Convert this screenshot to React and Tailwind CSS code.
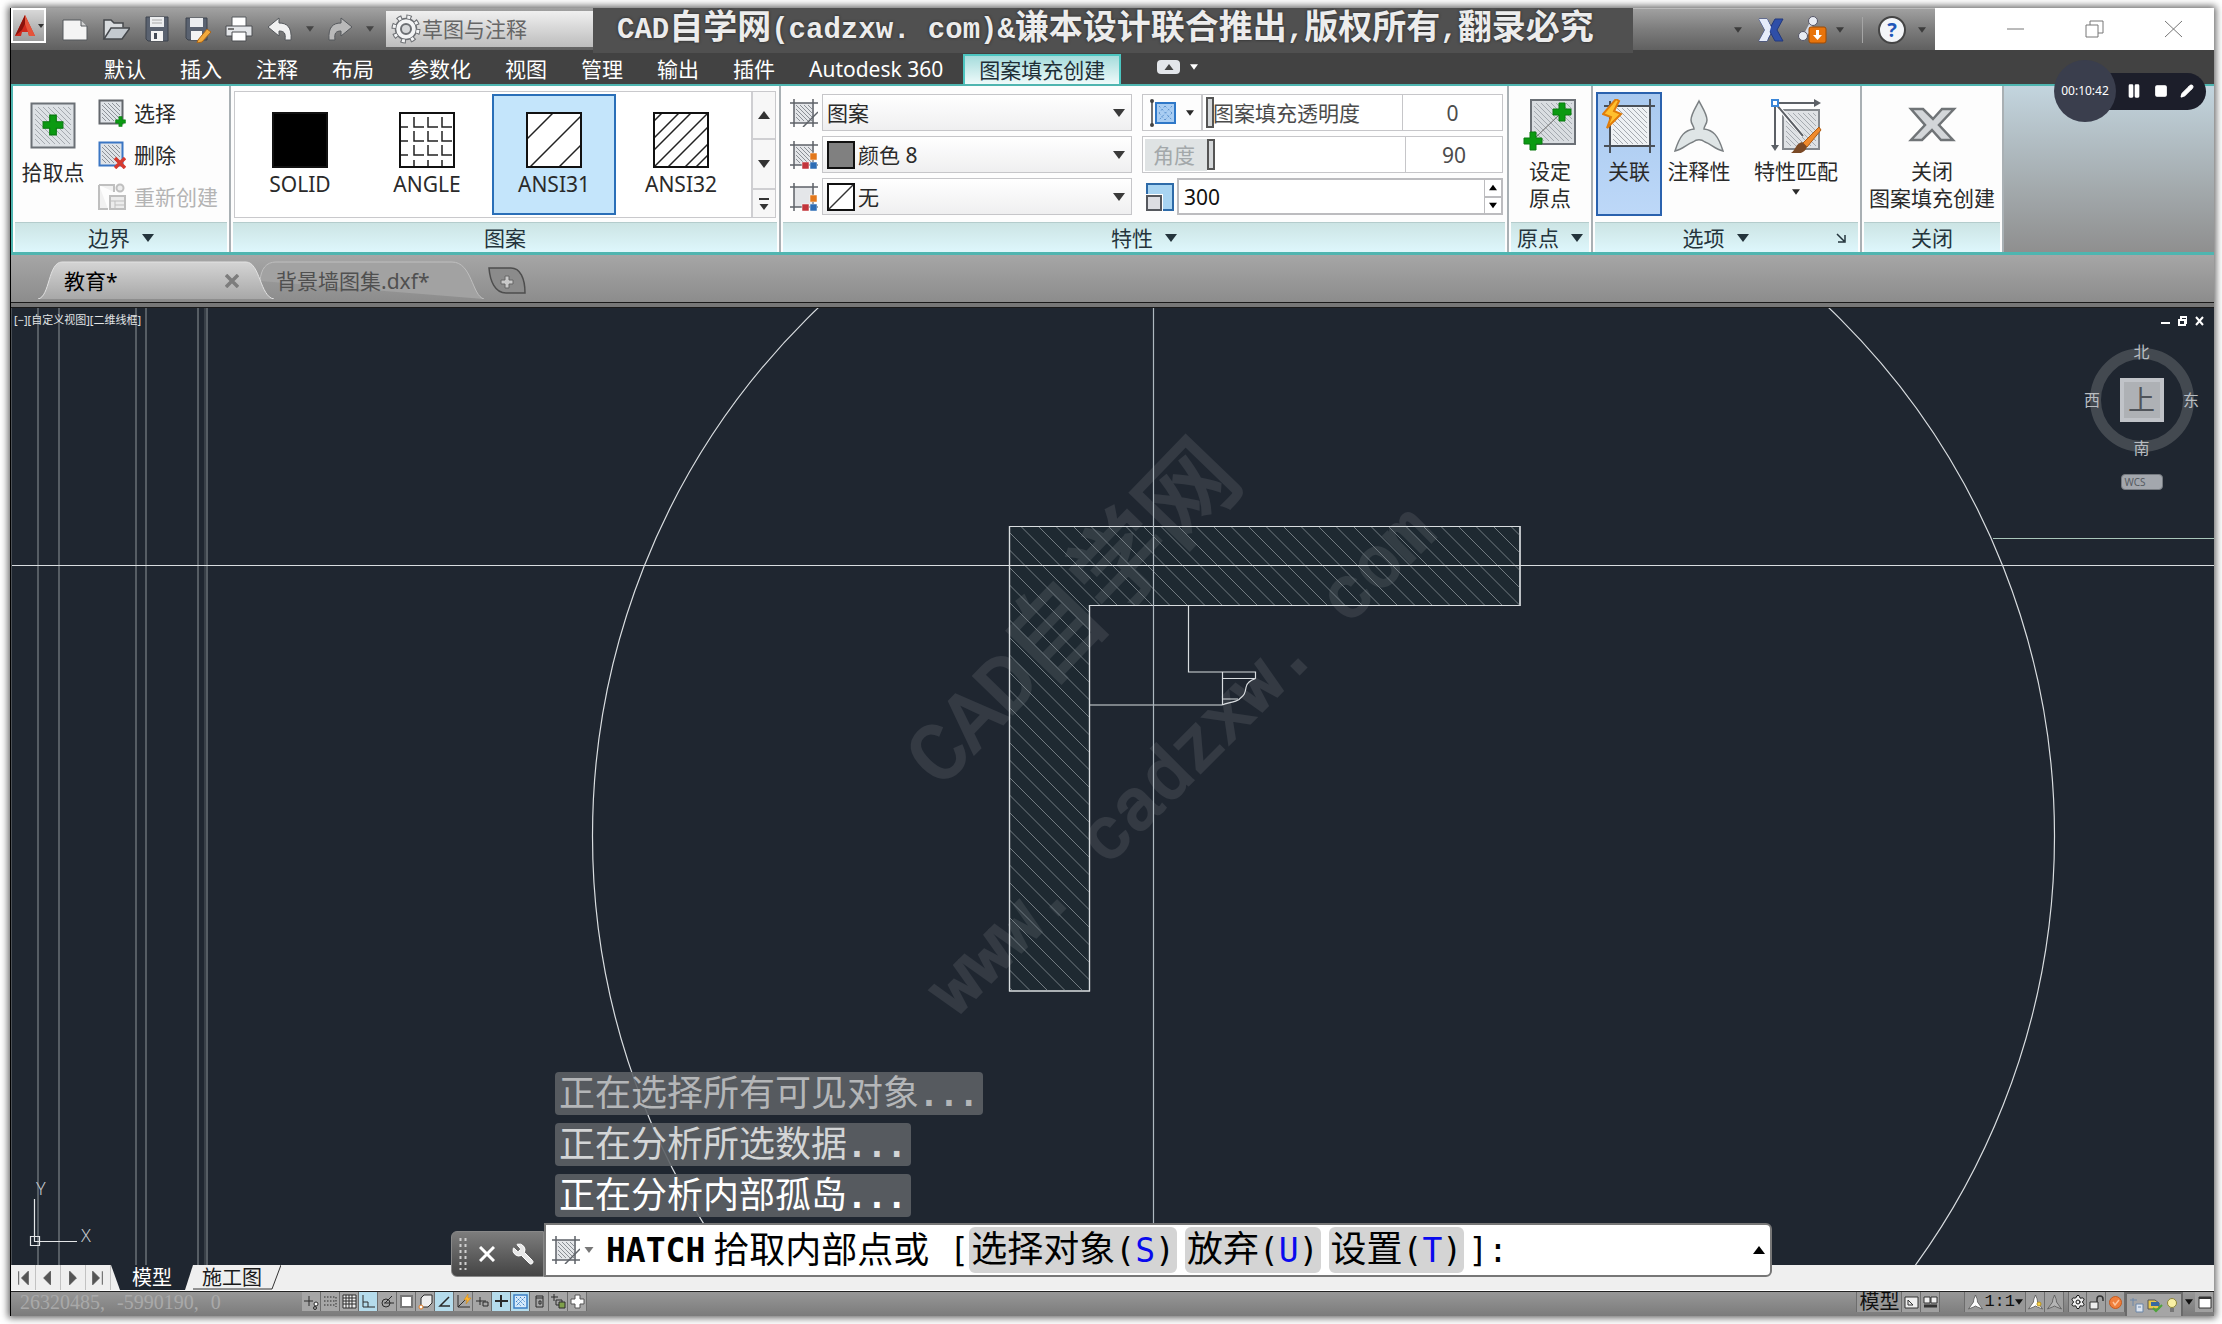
import React from "react";
import { Pause, Square, Pencil, Wrench, Settings } from "lucide-react";

const Caret = ({ up = false, className = "w-3 h-2" }) => (
  <svg viewBox="0 0 12 8" className={className} aria-hidden="true">
    <path d={up ? "M0 8h12L6 0z" : "M0 0h12L6 8z"} fill="currentColor" />
  </svg>
);

const HatchLines = ({ x, y, w, h, step = 4, color = "#8d9299" }) => {
  const id = `h${x}-${y}-${w}-${h}-${step}`;
  return (
    <>
      <clipPath id={id}>
        <rect x={x} y={y} width={w} height={h} />
      </clipPath>
      <g clipPath={`url(#${id})`} stroke={color} strokeWidth="1">
        {Array.from({ length: Math.ceil((w + h) / step) }, (_, i) => (
          <path key={i} d={`M${x - h + i * step} ${y}l${h} ${h}`} />
        ))}
      </g>
    </>
  );
};

const Plus = ({ x, y, s = 1 }) => (
  <path
    transform={`translate(${x} ${y}) scale(${s})`}
    d="M-3-9h6v6h6v6h-6v6h-6V3h-6v-6h6z"
    fill="#0b9a12"
    stroke="#0a7a10"
    strokeWidth="1"
  />
);

/* ---------- quick access bar ---------- */

const quickIcons = {
  新建: (
    <>
      <path d="M2 5h18l6 6v14H2z" fill="#f4f4f4" stroke="#55585c" />
      <path d="M20 5v6h6" fill="#d0d0d0" stroke="#55585c" />
    </>
  ),
  打开: (
    <>
      <path d="M2 24V5h7l3 3h9v4" fill="#d9dcdf" stroke="#45484c" strokeWidth="1.5" />
      <path d="M2 24l7-11h19l-8 11z" fill="#c3c9cf" stroke="#45484c" strokeWidth="1.5" />
    </>
  ),
  保存: (
    <>
      <path d="M3 2h22v24H5l-2-2z" fill="#5a6270" stroke="#3c424c" />
      <path d="M7 2h14v10H7z" fill="#eceef0" />
      <path d="M9 5h10M9 8h10" stroke="#aaa" />
      <path d="M8 16h12v10H8z" fill="#f4f4f4" />
      <path d="M11 18h3v6h-3z" fill="#444b57" />
    </>
  ),
  另存为: (
    <>
      <path d="M2 3h21v22H4l-2-2z" fill="#5a6270" stroke="#3c424c" />
      <path d="M6 3h13v9H6z" fill="#eceef0" />
      <path d="M7 16h11v9H7z" fill="#f4f4f4" />
      <path d="M14 25l9-11 4 3-9 10-5 1z" fill="#f2a93b" stroke="#a8641a" />
    </>
  ),
  打印: (
    <>
      <path d="M7 2h14v10H7z" fill="#fff" stroke="#55585c" />
      <path d="M1 11h26v10H1z" fill="#e3e5e8" stroke="#4a4d51" />
      <path d="M7 17h14v9H7z" fill="#fff" stroke="#4a4d51" />
      <path d="M3 14h6" stroke="#777" strokeWidth="2" />
    </>
  ),
};

const UndoIcon = ({ flip = false }) => (
  <svg viewBox="0 0 28 28" className={flip ? "h-7 w-7 -scale-x-100" : "h-7 w-7"} aria-hidden="true">
    <path
      d="M2 12L13 3v5c8 0 13 4 12 17h-6c1-7-1-9-6-9v5z"
      fill={flip ? "#b9b9b9" : "#f1f1f1"}
      stroke="#55585c"
    />
  </svg>
);

const GearIcon = () => (
  <svg viewBox="0 0 32 32" className="h-8 w-8 shrink-0" aria-hidden="true">
    <circle cx="16" cy="16" r="12" fill="none" stroke="#6c6f73" strokeWidth="5" strokeDasharray="5 4.420" />
    <circle cx="16" cy="16" r="10.500" fill="#f3f4f5" stroke="#6c6f73" strokeWidth="1.500" />
    <circle cx="16" cy="16" r="12" fill="none" stroke="#f3f4f5" strokeWidth="3" strokeDasharray="3 6.420" strokeDashoffset="-1" />
    <circle cx="16" cy="16" r="5" fill="#d5d7d9" stroke="#6c6f73" strokeWidth="2" />
  </svg>
);

const TitleBar = () => (
  <header className="flex h-[42px] bg-linear-to-b from-[#a2a2a2] via-[#7d7d7d] to-[#606060]">
    <button
      aria-label="应用程序菜单"
      className="flex h-[35px] w-[35px] items-center justify-center gap-0.5 border-2 border-white bg-linear-to-b from-[#d8d8d8] to-[#9c9c9c]"
    >
      <svg viewBox="0 0 22 24" className="h-6 w-[22px]">
        <path d="M11 1L1 22h6l1-4h6l1 4h6z" fill="#cf2a1d" />
        <path d="M11 1L1 22l7-6 3-6z" fill="#8b130c" />
        <path d="M11 1v9l3 8 1 4h6z" fill="#e5533a" />
      </svg>
      <Caret className="h-1 w-1.5 text-[#333]" />
    </button>
    <div className="ml-[15px] flex flex-1 items-center">
      <div className="flex w-[325px] shrink-0 items-center gap-3 text-[#454545]">
        {Object.entries(quickIcons).map(([label, drawing]) => (
          <button key={label} aria-label={label} className="h-7 w-[29px]">
            <svg viewBox="0 0 28 28" className="h-7 w-7">{drawing}</svg>
          </button>
        ))}
        <button aria-label="放弃" className="flex items-center gap-3">
          <UndoIcon />
          <Caret className="h-1.5 w-2" />
        </button>
        <button aria-label="重做" className="flex items-center gap-3">
          <UndoIcon flip />
          <Caret className="h-1.5 w-2" />
        </button>
      </div>
      <div className="flex h-9 w-[207px] shrink-0 items-center bg-linear-to-b from-[#f0f0f0] to-[#bdbdbd] pl-1 text-[#666]">
        <GearIcon />
        <select aria-label="工作空间" className="w-full appearance-none bg-transparent text-[21px] leading-8 outline-none">
          <option>草图与注释</option>
        </select>
      </div>
      <h1 className="z-10 flex h-[45px] flex-1 items-center self-start overflow-hidden bg-[#505050] pl-6 font-['Liberation_Mono','Noto_Sans_CJK_SC',monospace] text-[34px] leading-[45px] font-bold whitespace-pre text-[#ececec] [text-shadow:0_0_3px_#222]">
        <span className="text-[29px]">CAD</span>自学网<span className="text-[29px]">(cadzxw. com)&amp;</span>谦本设计联合推出
        <span className="text-[29px]">,</span>版权所有<span className="text-[29px]">,</span>翻录必究
      </h1>
    </div>
    <div className="flex w-[302px] items-center border-t border-[#bbb] pl-[101px] text-[#3c3c3c]">
      <Caret className="h-1.5 w-2" />
      <button aria-label="Exchange" className="ml-4">
        <svg viewBox="0 0 26 24" className="h-6 w-[26px]">
          <path d="M1 1h8l6 11-6 11H1l6-11z" fill="#e6ecfa" stroke="#34488c" />
          <path d="M25 1h-8l-6 11 6 11h8l-6-11z" fill="#2f4fa8" stroke="#22387c" />
          <path d="M1 1h8l4 8-4 14H1l6-11z" fill="#e6ecfa" />
        </svg>
      </button>
      <button aria-label="Autodesk 应用" className="ml-3.5 flex items-center gap-2">
        <svg viewBox="0 0 30 28" className="h-7 w-[30px]">
          <path d="M15 5L7 20" stroke="#d5dbe8" strokeWidth="4" />
          <circle cx="15" cy="5" r="4.500" fill="#e8ecf4" stroke="#556" />
          <circle cx="5" cy="20" r="4.500" fill="#e8ecf4" stroke="#556" />
          <rect x="11" y="11" width="17" height="16" rx="2" fill="#e8740c" stroke="#9c4a04" />
          <path d="M18 14h3v5h3l-4.500 5-4.500-5h3z" fill="#fff" />
        </svg>
        <Caret className="h-1.5 w-2" />
      </button>
      <span className="ml-[18px] h-[26px] w-px bg-[#a5a5a5]" />
      <button
        aria-label="帮助"
        className="ml-[15px] flex h-7 w-7 items-center justify-center rounded-full border-2 border-[#444] bg-[#f3f5f8] text-xl leading-6 font-bold text-[#2257b8]"
      >
        ?
      </button>
      <Caret className="ml-3 h-1.5 w-2" />
    </div>
    <div className="flex w-[279px] items-center gap-[60px] bg-white pl-[71px] text-[#777]">
      {["M1 9h17", "M1 5h12v12H1zM5 5V1h13v12h-5", "M1 1l17 16M18 1L1 17"].map((d, i) => (
        <button key={d} aria-label={["最小化", "还原", "关闭"][i]} className="shrink-0">
          <svg viewBox="0 0 19 18" className="h-[18px] w-[19px]" fill="none" stroke="currentColor">
            <path d={d} />
          </svg>
        </button>
      ))}
    </div>
  </header>
);

const menuTabs = ["默认", "插入", "注释", "布局", "参数化", "视图", "管理", "输出", "插件", "Autodesk 360"];

const MenuTabs = () => (
  <nav className="flex h-[34px] items-end bg-[#424242] pl-[93px] text-[21px] leading-[30px] whitespace-nowrap text-white">
    <div className="flex gap-[34px]">
      {menuTabs.map((tab) => (
        <button key={tab} className="h-[30px]">{tab}</button>
      ))}
    </div>
    <button className="ml-5 h-[30px] border-2 border-b-0 border-[#4cc5c0] bg-linear-to-b from-[#a5dcdc] to-[#eefafa] px-3.5 leading-7 text-[#1e2e36]">
      图案填充创建
    </button>
    <button aria-label="最小化功能区" className="mb-2.5 ml-9 flex items-center gap-2.5">
      <span className="flex h-3.5 w-[23px] items-center justify-center rounded-sm bg-[#e3e6ea] text-[#444]">
        <Caret up className="h-1.5 w-2.5" />
      </span>
      <Caret className="h-1.5 w-2" />
    </button>
  </nav>
);

/* ---------- ribbon ---------- */

const Panel = ({ title, caret, launcher, className, children }) => (
  <section className={`flex shrink-0 flex-col border-r-2 border-[#a9b0b4] bg-[#fdfdfd] ${className}`}>
    <div className="h-[136px]">{children}</div>
    <div className="mx-0.5 flex h-[30px] items-center border-t border-[#b4cccc] bg-linear-to-b from-[#cce4e4] to-[#def7fc] text-[#24343c]">
      <h2 className="flex flex-1 items-center justify-center gap-3 text-[21px] leading-7">
        {title}
        {caret && <Caret />}
      </h2>
      {launcher && (
        <button aria-label="图案填充设置" className="w-[22px]">
          <svg viewBox="0 0 10 10" className="h-2.5 w-2.5" stroke="currentColor" strokeWidth="1.5" fill="none">
            <path d="M1 1l7 7M9 2v7H2" />
          </svg>
        </button>
      )}
    </div>
  </section>
);

const SmallBoundaryIcon = ({ kind }) => (
  <svg viewBox="0 0 28 28" className="h-7 w-7 shrink-0" aria-hidden="true">
    {kind === "rebuild" ? (
      <g stroke="#bfbfbf" fill="#ececec">
        <path d="M1 2h15v7M1 2v24h9" fill="#f1f1f1" strokeWidth="2" />
        <circle cx="22" cy="5" r="3.500" strokeWidth="2" />
        <path d="M12 13h15v13H12z" strokeWidth="2" />
        <path d="M12 18h15M17 18v8M17 22h10" />
      </g>
    ) : (
      <>
        <rect x="1.500" y="1.500" width="23" height="23" fill="#dfe3e8" stroke={kind === "remove" ? "#3b76c4" : "#63676c"} strokeWidth="2" />
        <HatchLines x={4} y={4} w={18} h={18} step={4} />
        {kind === "remove" ? (
          <path d="M17 17l10 10M27 17L17 27" stroke="#d63a2f" strokeWidth="3.500" />
        ) : (
          <Plus x={22.5} y={22.5} s={0.55} />
        )}
      </>
    )}
  </svg>
);

const boundaryActions = [
  { label: "选择", kind: "select" },
  { label: "删除", kind: "remove" },
  { label: "重新创建", kind: "rebuild" },
];

const BoundaryPanel = () => (
  <Panel title="边界" caret className="w-[218px]">
    <div className="flex">
      <button className="flex w-20 flex-col items-center gap-2.5 pt-4">
        <svg viewBox="0 0 46 48" className="h-12 w-[46px]">
          <rect x="1.500" y="1.500" width="43" height="44" fill="#dde1e5" stroke="#6b7076" strokeWidth="2" />
          <HatchLines x={5} y={5} w={36} h={37} step={5} color="#a5aab0" />
          <Plus x={23} y={23} s={1.1} />
        </svg>
        <span className="text-[21px] leading-6">拾取点</span>
      </button>
      <div className="flex-1 pt-1.5 pl-[5px]">
        {boundaryActions.map(({ label, kind }) => (
          <button
            key={label}
            disabled={kind === "rebuild"}
            className="flex h-[42px] items-center gap-2 text-[21px] leading-6 disabled:text-[#b4b4b4]"
          >
            <SmallBoundaryIcon kind={kind} />
            {label}
          </button>
        ))}
      </div>
    </div>
  </Panel>
);

const swatches = {
  SOLID: <rect width="56" height="56" fill="#000" />,
  ANGLE: (
    <path
      d="M0 15h9M15 5v10h10M29 5v10h10M43 5v10h10M0 29h9M15 19v10h10M29 19v10h10M43 19v10h10M0 43h9M15 33v10h10M29 33v10h10M43 33v10h10M15 48v8M29 48v8M43 48v8"
      stroke="#222"
      strokeWidth="1.500"
      fill="none"
    />
  ),
  ANSI31: <path d="M0 28L28 0M3 56L56 3M32 56L56 32" stroke="#222" strokeWidth="1.500" />,
  ANSI32: <path d="M0 10L10 0M0 27L27 0M0 39L39 0M2 54L54 2M14 56L56 14M31 56L56 31M42 56L56 42" stroke="#222" strokeWidth="1.500" />,
};

const PatternPanel = () => (
  <Panel title="图案" className="w-[550px]">
    <div className="pt-[5px] pr-[3px] pl-[3px]">
      <div className="flex h-[127px] border border-[#c9c9cc] bg-white">
        <div className="flex flex-1 gap-[3px] pt-0.5 pl-[3px]">
          {Object.entries(swatches).map(([name, drawing]) => (
            <button
              key={name}
              aria-pressed={name === "ANSI31"}
              className="flex h-[121px] w-[124px] flex-col items-center gap-1 border-2 border-transparent pt-4 text-[#2a2a2a] aria-pressed:border-[#2a6fb8] aria-pressed:bg-[#c4e5fb]"
            >
              <svg viewBox="0 0 56 56" className="h-14 w-14">
                <rect width="56" height="56" fill="#fff" />
                {drawing}
                <rect x="1" y="1" width="54" height="54" fill="none" stroke="#111" strokeWidth="2" />
              </svg>
              <span className="text-[21px] leading-6">{name}</span>
            </button>
          ))}
        </div>
        <div className="flex w-6 flex-col border-l-2 border-[#cfcfd2] text-[#333]">
          <button aria-label="上一行" className="flex h-12 items-center justify-center border-b-2 border-[#cfcfd2] bg-[#f7f7f7]">
            <Caret up />
          </button>
          <button aria-label="下一行" className="flex h-[50px] items-center justify-center border-b-2 border-[#cfcfd2] bg-[#f7f7f7]">
            <Caret />
          </button>
          <button aria-label="展开图案库" className="flex flex-1 flex-col items-center justify-center gap-1 bg-[#f7f7f7]">
            <span className="h-0.5 w-2.5 bg-[#333]" />
            <Caret className="h-1.5 w-2.5" />
          </button>
        </div>
      </div>
    </div>
  </Panel>
);

const PropertyIcon = ({ dots, plain }) => (
  <svg viewBox="0 0 28 28" className="h-7 w-7 shrink-0" aria-hidden="true">
    <rect x="4" y="4" width="20" height="20" fill="#e4e6e9" />
    {!plain && <HatchLines x={6} y={6} w={16} h={16} step={4} color="#8a8f95" />}
    <path d="M4 0v28M23 0v28M0 4h28M0 24h28" stroke="#5e6268" strokeWidth="1.500" />
    {dots ? (
      <g stroke="#fff" strokeWidth=".5">
        <rect x="20" y="12" width="7" height="7" fill="#e3781c" />
        <rect x="12" y="21" width="7" height="7" fill="#c2353b" />
        <rect x="20" y="21" width="7" height="7" fill="#2e6db5" />
      </g>
    ) : (
      <path d="M13 28l15-15" stroke="#5e6268" strokeWidth="1.500" />
    )}
  </svg>
);

const comboRows = [
  { id: "hatch-type", label: "图案填充类型", value: "图案", icon: <PropertyIcon /> },
  { id: "hatch-color", label: "图案填充颜色", value: "颜色 8", icon: <PropertyIcon dots />, swatch: "#808080" },
  { id: "hatch-background", label: "背景色", value: "无", icon: <PropertyIcon dots plain />, swatch: "none" },
];

const sliderThumb =
  "appearance-none bg-transparent [&::-webkit-slider-thumb]:h-[31px] [&::-webkit-slider-thumb]:w-2 [&::-webkit-slider-thumb]:appearance-none [&::-webkit-slider-thumb]:border-2 [&::-webkit-slider-thumb]:border-[#555] [&::-webkit-slider-thumb]:bg-[#d5d8da]";

const PropertiesPanel = () => (
  <Panel title="特性" caret className="w-[728px]">
    <div className="flex gap-2.5 pt-2 pr-1 pl-[9px] text-[21px] leading-8 text-[#2a2a2a]">
      <div className="flex w-[342px] flex-col gap-[5px]">
        {comboRows.map(({ id, label, value, icon, swatch }) => (
          <div key={id} className="flex h-[37px] items-center gap-1">
            <label htmlFor={id} aria-label={label}>{icon}</label>
            <div className="relative flex h-full flex-1 items-center border border-[#c6c6c9] bg-linear-to-b from-white to-[#efeff0] pl-1">
              {swatch && (
                <svg viewBox="0 0 28 28" className="mr-[3px] h-7 w-7 shrink-0">
                  <rect x="1" y="1" width="26" height="26" fill={swatch === "none" ? "#fff" : swatch} stroke="#111" strokeWidth="2" />
                  {swatch === "none" && <path d="M2 26L26 2" stroke="#333" strokeWidth="1.500" />}
                </svg>
              )}
              <select id={id} className="w-full appearance-none bg-transparent outline-none">
                <option>{value}</option>
              </select>
              <Caret className="pointer-events-none absolute right-1.5 h-2 w-3 text-[#3a3a3a]" />
            </div>
          </div>
        ))}
      </div>
      <div className="flex flex-1 flex-col gap-[5px]">
        <div className="flex h-[37px]">
          <button aria-label="图案填充透明度类型" className="flex w-[60px] items-center gap-2.5 border border-[#c6c6c9] pl-[7px]">
            <svg viewBox="0 0 26 28" className="h-7 w-[26px]">
              <path d="M2 1v26" stroke="#444" strokeWidth="1.500" />
              <circle cx="2" cy="2" r="2" fill="#444" />
              <circle cx="2" cy="26" r="2" fill="#444" />
              <rect x="6" y="4" width="19" height="20" fill="#a9cdf2" stroke="#2f78c8" strokeWidth="2" />
              <path d="M9 7l13 14M22 7L9 21M9 14l6 7M15 7l7 7M15 7l-6 7M22 14l-7 7" stroke="#5c93cf" strokeDasharray="2 2" />
            </svg>
            <Caret className="h-1.5 w-2" />
          </button>
          <div className="relative flex flex-1 items-center border border-[#c6c6c9] bg-white">
            <input id="transparency" type="range" min="0" max="90" defaultValue="0" className={`ml-[3px] h-full w-[196px] ${sliderThumb}`} />
            <label htmlFor="transparency" className="pointer-events-none absolute left-2.5 text-[#4c4c4c]">图案填充透明度</label>
            <output className="h-full flex-1 border-l border-[#c6c6c9] text-center leading-9 text-[#4c4c4c]">0</output>
          </div>
        </div>
        <div className="flex h-[37px] items-center border border-[#c6c6c9] bg-white">
          <label htmlFor="angle" className="ml-0.5 h-8 w-[62px] bg-[#dfe3e4] pl-2 text-[#a3a8aa]">角度</label>
          <input id="angle" type="range" min="0" max="359" defaultValue="0" className={`h-full w-[198px] ${sliderThumb}`} />
          <output className="h-full flex-1 border-l border-[#c6c6c9] text-center leading-9 text-[#4c4c4c]">90</output>
        </div>
        <div className="flex h-[37px] items-center">
          <label htmlFor="scale" aria-label="图案填充比例" className="w-[35px] pl-1">
            <svg viewBox="0 0 28 28" className="h-7 w-7">
              <rect x="1" y="1" width="26" height="26" fill="#a8d4f2" stroke="#2d6aa8" strokeWidth="2" />
              <path d="M0 11h17v17H0z" fill="#fff" />
              <rect x="1" y="13" width="14" height="14" fill="#dcdde2" stroke="#55585e" strokeWidth="2" />
            </svg>
          </label>
          <div className="flex h-full flex-1 border-2 border-[#bcbcbf] bg-white">
            <input id="scale" defaultValue="300" className="w-full bg-transparent pl-[5px] text-[#111] outline-none" />
            <div className="flex w-[18px] flex-col border-l border-[#bcbcbf] text-black">
              <button aria-label="增大比例" className="flex flex-1 items-center justify-center border-b-2 border-[#bcbcbf]">
                <Caret up className="h-[7px] w-2" />
              </button>
              <button aria-label="减小比例" className="flex flex-1 items-center justify-center">
                <Caret className="h-[7px] w-2" />
              </button>
            </div>
          </div>
        </div>
      </div>
    </div>
  </Panel>
);

const BigIcon = ({ children }) => (
  <svg viewBox="0 0 54 54" className="h-[54px] w-[54px]" aria-hidden="true">{children}</svg>
);

const OriginPanel = () => (
  <Panel title="原点" caret className="w-[84px]">
    <button className="flex w-full flex-col items-center gap-1.5 pt-3 text-[21px] leading-[27px]">
      <BigIcon>
        <rect x="8" y="2" width="44" height="44" fill="#d9dde1" stroke="#6b7076" strokeWidth="2" />
        <HatchLines x={11} y={5} w={38} h={38} step={5} color="#a5aab0" />
        <path d="M10 42l28-27" stroke="#666" />
        <Plus x={39} y={14} />
        <Plus x={10} y={43} />
      </BigIcon>
      <span>设定<br />原点</span>
    </button>
  </Panel>
);

const OptionsPanel = () => (
  <Panel title="选项" caret launcher className="w-[269px]">
    <div className="flex pt-1.5 pl-[3px] text-[21px] leading-7 text-[#2a2a2a]">
      <button
        aria-pressed="true"
        className="flex h-[124px] w-[66px] flex-col items-center gap-1 border-2 border-[#2a62ae] bg-linear-to-b from-[#a9c9ef] to-[#bdd8f8] pt-[5px]"
      >
        <BigIcon>
          <rect x="9" y="7" width="38" height="40" fill="#eef1f4" />
          <HatchLines x={11} y={9} w={34} h={36} step={5} color="#a5aab0" />
          <path d="M8 2v52M48 0v54M2 7h51M2 47h51" stroke="#4a5058" strokeWidth="2" />
          <path d="M14 0L1 15l8 3-4 11 14-14-7-3 5-10z" fill="#ffc02e" stroke="#e07c0a" strokeWidth="2" />
        </BigIcon>
        关联
      </button>
      <button className="flex w-[74px] flex-col items-center gap-1 pt-[7px]">
        <BigIcon>
          <path
            d="M27 2c3 6 8 13 8 19 0 4-3 6-3 9 9 1 14 6 19 22-8-2-12-7-18-9-4-3-8-3-12 0-6 2-10 7-18 9 5-16 10-21 19-22 0-3-3-5-3-9 0-6 5-13 8-19z"
            fill="#dfe5e6"
            stroke="#7b8083"
            strokeWidth="1.500"
          />
        </BigIcon>
        注释性
      </button>
      <button className="ml-3 flex w-24 flex-col items-center gap-1 pt-[7px]">
        <BigIcon>
          <rect x="14" y="11" width="36" height="39" fill="#dfe2e5" stroke="#85898e" strokeWidth="2" />
          <HatchLines x={17} y={14} w={30} h={33} step={5} color="#a5aab0" />
          <path d="M6 4l28 33" stroke="#fff" strokeWidth="4" />
          <path d="M6 4l28 33M8 4h38M6 6v41" stroke="#5c6066" strokeWidth="2" />
          <path d="M45 0l7 4-7 4zM2 46h8l-4 6z" fill="#5c6066" />
          <path d="M3 1h6v6H3z" fill="#fff" stroke="#3a86d8" strokeWidth="2" />
          <path d="M50 28l2 3-14 17-4-4z" fill="#f08a2c" stroke="#b05c12" />
          <path d="M22 54c5-3 4-9 11-11l5 5c-2 6-9 8-16 6z" fill="#7b4a26" />
        </BigIcon>
        <span>特性匹配</span>
        <Caret className="h-1.5 w-2" />
      </button>
    </div>
  </Panel>
);

const ClosePanel = () => (
  <Panel title="关闭" className="w-[142px]">
    <button className="flex w-full flex-col items-center gap-1.5 pt-3 text-[21px] leading-[27px]">
      <BigIcon>
        <path d="M6 11h12l10 10 9-10h12L34 27l14 15H36L27 32l-10 10H6l14-15z" fill="#d3d6d9" stroke="#707477" strokeWidth="2.500" />
      </BigIcon>
      <span>关闭<br />图案填充创建</span>
    </button>
  </Panel>
);

const Ribbon = () => (
  <div className="flex border-t-2 border-b-[3px] border-l-2 border-[#4fb5b0]">
    <BoundaryPanel />
    <PatternPanel />
    <PropertiesPanel />
    <OriginPanel />
    <OptionsPanel />
    <ClosePanel />
    <div className="flex-1 bg-linear-to-b from-[#c3d5df] via-[#a9b2b6] to-[#8f8f8f]" />
  </div>
);

/* ---------- drawing tabs and model space ---------- */

const FileTabs = () => (
  <div className="flex h-[47px] items-end bg-linear-to-b from-[#a6a6a6] to-[#8c8c8c] pb-[3px] pl-[27px] text-[21px] leading-8">
    <div className="relative z-10 flex h-[38px] w-[236px] items-center pt-0.5 pr-[35px] pl-[26px] text-black">
      <svg viewBox="0 0 236 38" preserveAspectRatio="none" className="absolute inset-0 h-full w-full">
        <defs>
          <linearGradient id="tab-on" x2="0" y2="1">
            <stop stopColor="#d4d4d4" />
            <stop offset="1" stopColor="#a8a8a8" />
          </linearGradient>
        </defs>
        <path d="M0 38c12-2 10-37 24-37h184c14 0 14 35 28 37" fill="url(#tab-on)" stroke="#e2e2e2" />
      </svg>
      <button className="relative flex-1 text-left">教育*</button>
      <button aria-label="关闭教育" className="relative h-3.5 w-3.5">
        <svg viewBox="0 0 14 14" stroke="#7d7d7d" strokeWidth="3.500">
          <path d="M1 1l12 12M13 1L1 13" />
        </svg>
      </button>
    </div>
    <div className="relative -ml-4 flex h-[38px] w-[228px] items-center pt-0.5 pl-[18px] text-[#505050]">
      <svg viewBox="0 0 228 38" preserveAspectRatio="none" className="absolute inset-0 h-full w-full">
        <path d="M2 20c1-12 6-19 16-19h176c20 0 20 34 32 37" fill="#a2a2a2" stroke="#bfbfbf" />
      </svg>
      <button className="relative">背景墙图集.dxf*</button>
    </div>
    <button aria-label="新图形" className="mb-[5px] ml-0.5">
      <svg viewBox="0 0 38 27" className="h-[27px] w-[38px]">
        <path d="M1 1h22c9 0 14 10 14 25H18C7 26 2 14 1 1z" fill="#8b8b8b" stroke="#4e4e4e" strokeWidth="1.500" />
        <path d="M17 9h4v4h4v4h-4v4h-4v-4h-4v-4h4z" fill="#c9c9c9" stroke="#666" />
      </svg>
    </button>
  </div>
);

const hatchOffsets = Array.from({ length: 57 }, (_, i) => 22 + i * 17.5);
const gridLines = [38, 59, 136, 146, 198, 207];

const Drawing = () => (
  <svg
    viewBox="12 308 2202 957"
    preserveAspectRatio="xMinYMin slice"
    className="absolute inset-0 h-full w-full"
    fill="none"
    stroke="#d9dde0"
    strokeWidth="1.200"
    role="img"
    aria-label="图形"
  >
    <clipPath id="wall">
      <path d="M1009.500 526.500h510.500v79h-430.500v385.500h-80z" />
    </clipPath>
    <g stroke="#7c8388">
      {gridLines.map((x) => (
        <path key={x} d={`M${x} 308v957`} />
      ))}
      <path d="M205 308v957" stroke="#4a5158" />
    </g>
    <path d="M1009.500 526.500h510.500v79h-430.500v385.500h-80z" fill="#1e2931" />
    <g stroke="#ffffff" strokeWidth="3" fill="#ffffff" opacity=".09">
      <g transform="translate(940 789) rotate(-46)">
        <text fontSize="82" fontFamily="'Liberation Mono', monospace">CAD</text>
        <text x="145" y="6" fontSize="96" fontFamily="'Noto Sans CJK SC', sans-serif">自学网</text>
      </g>
      <text transform="translate(956 1017) rotate(-45)" fontSize="71" fontFamily="'Liberation Mono', monospace">
        www. cadzxw. com
      </text>
    </g>
    <g clipPath="url(#wall)" stroke="#737c82" strokeWidth="1">
      {hatchOffsets.map((c) => (
        <path key={c} d={`M1000 ${1000 - c}l530 530`} />
      ))}
    </g>
    <path d="M1009.500 526.500h510.500v79h-430.500v385.500h-80z" />
    <path d="M1188.500 605.500V672h67v6.500M1222.500 672v33M1089 705h133M1222 678.500h33.500M1222 699h16" />
    <path d="M1255.500 678.500c-5 2-9 4-9.500 9-1 8-3 8-7 12-4 3-12 3-17 5.500" />
    <circle cx="1323.500" cy="836" r="731" />
    <path d="M1993 538.500h221" stroke="#a9c6ba" />
    <path d="M11 565.500h2203" />
    <path d="M1153.500 308v957" stroke="#aeb8bf" />
    {/* ucs marker */}
    <path d="M30.500 1236.500h9v9h-9zM34.500 1199v42.500H77" stroke="#e4e6e8" />
    <g stroke="none" fill="#c4c8cc" fontSize="18" fontFamily="'Noto Sans', sans-serif" fontWeight="300">
      <text x="36" y="1195">Y</text>
      <text x="81" y="1242">X</text>
    </g>
  </svg>
);

const ViewCube = () => (
  <div className="absolute top-[34px] right-[15px] flex w-[115px] flex-col items-center gap-4 text-[16px] leading-5 text-[#b9bdc1]">
    <div className="relative flex h-[116px] w-full flex-col items-center justify-between">
      <span className="absolute inset-y-1.5 left-1/2 w-[104px] -translate-x-1/2 rounded-full border-[11px] border-[#434950]" />
      <span className="relative">北</span>
      <div className="relative flex w-full items-center justify-between">
        <span>西</span>
        <button className="h-11 w-11 border-4 border-[#c0c3c8] bg-[#aeb1b5] text-[27px] leading-9 text-[#50545a]">上</button>
        <span>东</span>
      </div>
      <span className="relative">南</span>
    </div>
    <button className="h-4 w-[42px] rounded-sm border border-[#74797f] bg-[#a3a7ad] pl-[3px] text-left text-[10px] leading-3.5 text-[#565b61]">
      WCS
    </button>
  </div>
);

const messages = [
  { text: "正在选择所有可见对象", tone: "text-[#b4b6b8]" },
  { text: "正在分析所选数据", tone: "text-[#d3d5d6]" },
  { text: "正在分析内部孤岛", tone: "text-white" },
];

const commandOptions = [
  { label: "选择对象", hotkey: "S" },
  { label: "放弃", hotkey: "U" },
  { label: "设置", hotkey: "T" },
];

const CommandLine = () => (
  <div className="absolute -bottom-3 left-[439px] z-20 w-[60%] font-['DejaVu_Sans_Mono','Noto_Sans_CJK_SC',monospace] text-[36px] leading-[43px] whitespace-nowrap">
    <div className="ml-[104px] flex flex-col items-start gap-2">
      {messages.map(({ text, tone }) => (
        <p key={text} className={`h-[43px] rounded-sm bg-[#5c6165]/90 px-1 ${tone}`}>
          {text}<span className="text-[33px] font-bold">...</span>
        </p>
      ))}
    </div>
    <div className="mt-1.5 flex items-end">
      <div className="flex h-[46px] w-[93px] shrink-0 items-center rounded-l-md border border-[#888] bg-linear-to-b from-[#7d7d7d] to-[#454545] pl-[7px] text-white">
        <svg viewBox="0 0 8 32" className="h-8 w-2">
          <path d="M1.500 0v32M6.500 0v32" stroke="#cfcfcf" strokeWidth="2" strokeDasharray="3 3" />
        </svg>
        <button aria-label="关闭命令行" className="ml-3">
          <svg viewBox="0 0 16 16" className="h-4 w-4" stroke="currentColor" strokeWidth="3">
            <path d="M1 1l14 14M15 1L1 15" />
          </svg>
        </button>
        <button aria-label="自定义" className="ml-4">
          <Wrench className="h-6 w-6 -scale-x-100" fill="#e8e8e8" strokeWidth={1} />
        </button>
      </div>
      <div className="flex h-[54px] flex-1 items-center rounded-r-md border-2 border-[#777] bg-white pr-[5px] pl-1.5 text-black">
        <button aria-label="最近使用的命令" className="flex items-center gap-1 text-[#777]">
          <PropertyIcon />
          <Caret className="h-1.5 w-2.5" />
        </button>
        <b className="ml-3 text-[33px]">HATCH</b>
        <span className="ml-2">拾取内部点或</span>
        <span className="ml-5 text-[33px]">[</span>
        <div className="flex gap-2">
          {commandOptions.map(({ label, hotkey }) => (
            <button key={label} className="h-[46px] rounded-md bg-[#d4d4d4] px-0.5">
              {label}
              <span className="text-[33px]">
                (<span className="text-[#0a0aee]">{hotkey}</span>)
              </span>
            </button>
          ))}
        </div>
        <label htmlFor="command" className="ml-1 text-[33px]">]:</label>
        <input id="command" className="w-0 flex-1 bg-transparent outline-none" />
        <button aria-label="命令历史">
          <Caret up className="h-2 w-3" />
        </button>
      </div>
    </div>
  </div>
);

const Canvas = () => (
  <main className="relative flex-1 border-l border-[#4a4f55] bg-[#1f2630]">
    <Drawing />
    <button className="absolute top-1.5 left-0.5 text-[11px] leading-3 text-[#e2e5e7]">[−][自定义视图][二维线框]</button>
    <div className="absolute top-2 right-2.5 flex gap-2 text-white">
      {["M0 7h9", "M1 4h6v5H1zM3 3V1h6v6H7", "M1 1l7 8M8 1L1 9"].map((d, i) => (
        <button key={d} aria-label={["最小化图形", "还原图形", "关闭图形"][i]}>
          <svg viewBox="0 0 9 10" className="h-2.5 w-[9px]" fill="none" stroke="currentColor" strokeWidth="2">
            <path d={d} />
          </svg>
        </button>
      ))}
    </div>
    <ViewCube />
    <CommandLine />
  </main>
);

/* ---------- bottom bars ---------- */

const LayoutTabs = () => (
  <nav className="flex h-[26px] border-b border-white bg-[#efefef] text-[20px] leading-6">
    {["M8 2v14M18 2l-7 7 7 7z", "M15 2L8 9l7 7z", "M9 2l7 7-7 7z", "M7 2l7 7-7 7zM17 2v14"].map((d, i) => (
      <button
        key={d}
        aria-label={["第一个布局", "上一布局", "下一布局", "最后布局"][i]}
        className="flex w-[25px] items-center justify-center border-r border-[#c2c2c2]"
      >
        <svg viewBox="0 0 25 18" className="h-[18px] w-[25px]" fill="#555" stroke="#555">
          <path d={d} />
        </svg>
      </button>
    ))}
    <button className="relative w-[82px] text-center text-white">
      <svg viewBox="0 0 82 25" preserveAspectRatio="none" className="absolute inset-0 h-full w-full">
        <path d="M0 0h82l-8 25H9z" fill="#1f2630" />
      </svg>
      <span className="relative">模型</span>
    </button>
    <button className="relative w-[88px] text-center text-[#1a1a1a]">
      <svg viewBox="0 0 88 25" preserveAspectRatio="none" className="absolute inset-0 h-full w-full" fill="none" stroke="#333">
        <path d="M88 0l-9 24H-3" />
      </svg>
      <span className="relative pr-2.5">施工图</span>
    </button>
  </nav>
);

const modeToggles = [
  { label: "推断约束", draw: <><path d="M1 8h9M6 3v10" /><circle cx="13" cy="11" r="2" fill="#fff" /><circle cx="12" cy="15" r="1.500" /></> },
  { label: "捕捉模式", draw: <path d="M2 4h11M2 8h11M2 12h11M14 4v10" strokeDasharray="1.500 1.500" /> },
  { label: "栅格显示", draw: <path d="M2 2h13v13H2zM2 5h13M2 8h13M2 11h13M5 2v13M8 2v13M11 2v13" fill="#eee" /> },
  { label: "正交模式", on: true, draw: <path d="M3 2v12h12M3 9h5v5" /> },
  { label: "极轴追踪", draw: <><circle cx="7" cy="10" r="4" /><path d="M5 10h10M6 10l7-7" /></> },
  { label: "对象捕捉", draw: <path d="M3 3h11v11H3z" fill="#fff" stroke="#777" strokeWidth="2" /> },
  { label: "三维对象捕捉", draw: <><path d="M4 5l3-3h8v8l-4 4H4z" fill="#eee" /><circle cx="4" cy="14" r="2" fill="#fff" stroke="#e27a20" /></> },
  { label: "对象捕捉追踪", on: true, draw: <path d="M13 4L4 13h10" strokeWidth="1.500" /> },
  { label: "动态 UCS", draw: <><path d="M3 2v12h12M3 14l7-7" /><path d="M13 1L9 7h3l-1 4 5-6h-3z" fill="#ffb52e" stroke="#c98310" strokeWidth=".5" /></> },
  { label: "动态输入", draw: <path d="M2 8h10M6 4v8M9 9h5v4H9z" /> },
  { label: "显示线宽", on: true, draw: <path d="M2 8h13M8 2v12" strokeWidth="2" /> },
  { label: "显示透明度", on: true, draw: <><path d="M2 2h13v13H2z" fill="#d6eafa" stroke="#3b7fc4" strokeWidth="1.500" /><path d="M4 4l9 9M13 4l-9 9M8 4l5 5M4 8l5 5M9 4L4 9" stroke="#3b7fc4" strokeDasharray="1.500 1" /></> },
  { label: "快捷特性", draw: <path d="M5 3h7v11H5zM5 5h7M8 8h2v3H8z" /> },
  { label: "选择循环", draw: <><path d="M1 4h7M4 1v7M6 7h6v5H6z" /><path d="M9 9h6v6H9z" fill="#7fa04a" /></> },
  { label: "注释监视器", draw: <path d="M6 2h5v4h4v5h-4v4H6v-4H2V6h4z" fill="#fff" stroke="#555" /> },
];

const AnnoIcon = ({ color = "#fff" }) => (
  <path d="M8.500 1c1 3 2 4 2 7l5 7-5-2-2-1-2 1-5 2 5-7c0-3 1-4 2-7z" fill={color} stroke="#555" strokeWidth=".8" />
);

const StatusButton = ({ label, children }) => (
  <button aria-label={label} className="flex w-[19px] items-center justify-center border-r border-[#6d6d6d] bg-[#a0a0a0]">
    <svg viewBox="0 0 17 17" className="h-[17px] w-[17px]" fill="none" stroke="#333">{children}</svg>
  </button>
);

const StatusBar = () => (
  <footer className="flex h-[25px] items-start justify-between border-t border-[#222] bg-linear-to-b from-[#979797] to-[#7b7b7b]">
    <div className="flex">
      <div className="flex w-[291px] gap-3 pl-[9px] font-['Liberation_Serif',serif] text-[20px] leading-5 text-[#a9a9a9]">
        <span>26320485,</span>
        <span>-5990190,</span>
        <span>0</span>
      </div>
      {modeToggles.map(({ label, on = false, draw }) => (
        <button
          key={label}
          aria-label={label}
          aria-pressed={on}
          className="flex h-[19px] w-[19px] items-center justify-center border-r border-[#6d6d6d] bg-[#a6a6a6] aria-pressed:bg-[#b5dcec]"
        >
          <svg viewBox="0 0 17 17" className="h-[17px] w-[17px]" fill="none" stroke="#2b2b2b">{draw}</svg>
        </button>
      ))}
    </div>
    <div className="flex h-5 items-stretch text-[20px] leading-5 text-[#111]">
      <button className="border-x border-[#6d6d6d] bg-[#989898] px-0.5">模型</button>
      <StatusButton label="快速查看布局"><path d="M2 3h13v11H2z" fill="#eee" /><path d="M5 6v5h5z" /></StatusButton>
      <StatusButton label="快速查看图形"><path d="M2 3h6v6H2zM9 3h6v6H9z" fill="#eee" /><path d="M2 12h13" strokeWidth="3" /></StatusButton>
      <button className="ml-6 flex items-center border-x border-[#6d6d6d] bg-[#989898] px-0.5 font-['Liberation_Mono',monospace] text-[17px]">
        <svg viewBox="0 0 17 17" className="h-[17px] w-[17px]"><AnnoIcon /></svg>
        1:1
        <Caret className="h-1.5 w-2" />
      </button>
      <StatusButton label="注释可见性"><AnnoIcon /><circle cx="12" cy="10" r="2" fill="#f7d34b" stroke="#b8921c" /></StatusButton>
      <StatusButton label="自动缩放"><AnnoIcon color="#b5b5b5" /></StatusButton>
      <span className="w-1" />
      <button aria-label="切换工作空间" className="flex w-[19px] items-center justify-center border-x border-[#6d6d6d] bg-[#a0a0a0]">
        <Settings className="h-4 w-4" fill="#eee" strokeWidth={1.5} />
      </button>
      <StatusButton label="锁定"><path d="M2 8h8v7H2z" fill="#eee" /><path d="M9 8V5c0-4 6-4 6 0v2" strokeWidth="1.500" /></StatusButton>
      <StatusButton label="硬件加速"><circle cx="8.500" cy="8.500" r="6" fill="#f07f3c" stroke="#c65a1c" /><path d="M6 8l2 3 4-5" stroke="#ffc49a" strokeWidth="1.500" /></StatusButton>
      <div className="flex h-6 items-center gap-0.5 border-2 border-b-0 border-[#6a6a6a] bg-[#a5a5a5] px-0.5">
        <svg viewBox="0 0 16 16" className="h-4 w-4" fill="none" stroke="#6b86a8"><path d="M1 3h7M4 1v8M7 7h7v8H7zM9 10h3" fill="#dce4ee" /></svg>
        <svg viewBox="0 0 16 16" className="h-4 w-4"><path d="M1 3h7l4 3v6H1z" fill="#e7c64a" stroke="#555" /><path d="M4 5h8v4H4z" fill="#37699f" /><path d="M6 11l3 3 6-6" fill="none" stroke="#4da33a" strokeWidth="2" /></svg>
        <svg viewBox="0 0 14 16" className="h-4 w-3.5"><circle cx="7" cy="6" r="4.500" fill="#f9f0a4" stroke="#8d853a" /><path d="M5 11h4v4H5z" fill="#777" /></svg>
      </div>
      <button aria-label="状态栏菜单" className="flex w-3 items-center justify-center"><Caret className="h-1.5 w-2" /></button>
      <StatusButton label="全屏显示"><path d="M3 3h12v11H3z" fill="#fff" /><path d="M3 4h12" strokeWidth="2" /></StatusButton>
    </div>
  </footer>
);

const Recorder = () => (
  <div className="absolute top-[60px] right-4 z-30 flex items-center">
    <div className="z-10 flex h-[62px] w-[62px] items-center justify-center rounded-full bg-[#3a3e4d] text-[12px] leading-4 text-white">
      00:10:42
    </div>
    <div className="-ml-5 flex h-[37px] items-center gap-3 rounded-r-full bg-[#1c1e2a] pr-3 pl-[30px] text-white">
      <button aria-label="暂停"><Pause className="h-4 w-4" fill="currentColor" /></button>
      <button aria-label="停止"><Square className="h-3.5 w-3.5" fill="currentColor" /></button>
      <button aria-label="画笔"><Pencil className="h-3.5 w-3.5" fill="currentColor" /></button>
    </div>
  </div>
);

export default function App() {
  return (
    <div className="relative flex h-screen flex-col bg-white pt-2 pr-2 pb-2 pl-2.5 font-['Noto_Sans','Noto_Sans_CJK_SC',sans-serif] text-[#2a2a2a]">
      <div className="flex flex-1 flex-col border-l border-black shadow-[0_0_7px_2px_rgba(0,0,0,0.6)]">
        <TitleBar />
        <MenuTabs />
        <Ribbon />
        <FileTabs />
        <div className="h-1.5 border-y border-[#1a1a1a] bg-[#777]" />
        <Canvas />
        <LayoutTabs />
        <StatusBar />
      </div>
      <Recorder />
    </div>
  );
}
